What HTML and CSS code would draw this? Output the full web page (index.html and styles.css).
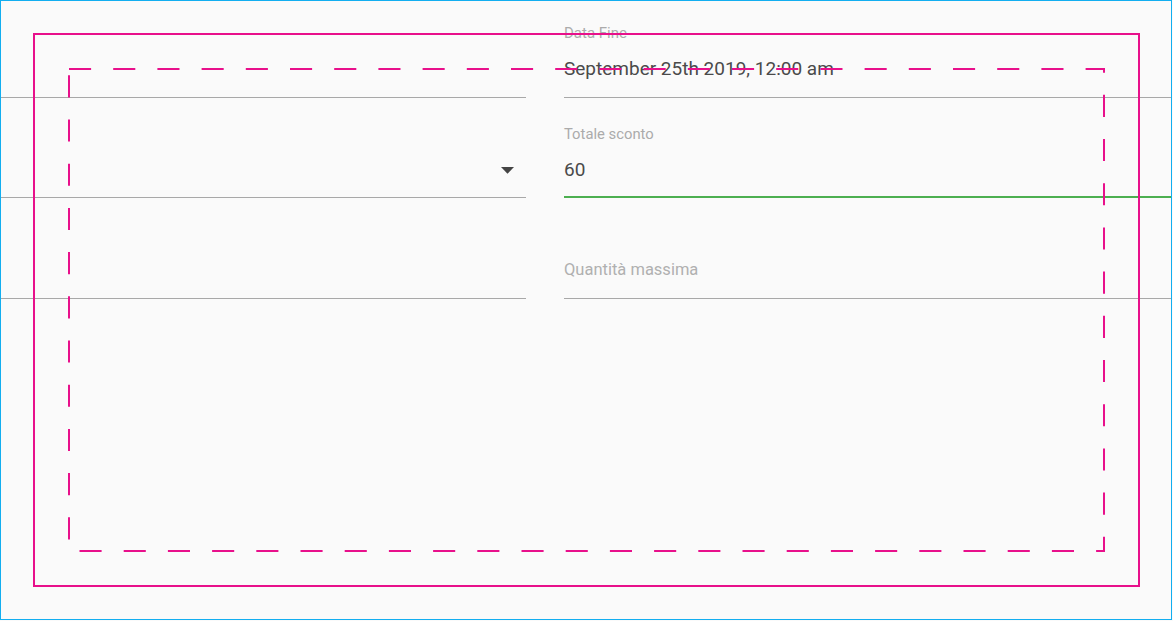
FILE: index.html
```html
<!DOCTYPE html>
<html lang="it">
<head>
<meta charset="utf-8">
<title>Form</title>
<link rel="stylesheet" href="styles.css">
</head>
<body>
<div class="stage">
  <div class="frame">
    <div class="form">
      <div class="field row1">
        <div class="control"></div>
      </div>
      <div class="field row1">
        <div class="label label-date">Data Fine</div>
        <div class="control"><span class="value">September 25th 2019, 12:00 am</span></div>
      </div>

      <div class="field row2">
        <div class="control select">
          <span class="value"></span>
          <svg class="arrow" width="13" height="7" viewBox="0 0 13 7"><polygon points="0,0 13,0 6.5,6.8" fill="#444"/></svg>
        </div>
      </div>
      <div class="field row2">
        <div class="label">Totale sconto</div>
        <div class="control focused"><span class="value">60</span></div>
      </div>

      <div class="field row3">
        <div class="control"></div>
      </div>
      <div class="field row3">
        <div class="control"><span class="placeholder">Quantità massima</span></div>
      </div>
    </div>
  </div>
  <svg class="overlay" width="1172" height="620" viewBox="0 0 1172 620">
    <rect x="34" y="34" width="1105" height="552" fill="none" stroke="#e8108b" stroke-width="2"/>
    <rect x="69" y="69" width="1035" height="482" fill="none" stroke="#e8108b" stroke-width="2" stroke-dasharray="22.1 22.1"/>
  </svg>
</div>
</body>
</html>
```

FILE: styles.css
```css
html, body {
  margin: 0;
  padding: 0;
  background: #fafafa;
}

body {
  font-family: Roboto, "Liberation Sans", Arial, sans-serif;
}

.stage {
  position: relative;
  width: 1172px;
  height: 620px;
}

.frame {
  box-sizing: border-box;
  width: 1172px;
  height: 620px;
  border: 1px solid #12aef0;
  background: #fafafa;
  overflow: hidden;
}

.form {
  display: grid;
  grid-template-columns: 525px 1fr;
  grid-template-rows: 97px 100px 101px;
  column-gap: 38px;
}

.field {
  display: flex;
  flex-direction: column;
  justify-content: flex-end;
  min-width: 0;
}

.label {
  font-size: 14.8px;
  line-height: 16px;
  color: #ababab;
  margin-bottom: 16px;
  white-space: nowrap;
}

.label-date {
  font-size: 15px;
  margin-bottom: 16px;
}

.control {
  display: flex;
  align-items: center;
  height: 24px;
  padding-bottom: 15px;
  border-bottom: 1px solid #a8a8a8;
}

.row1 .control {
  padding-bottom: 16px;
}

.row3 .control {
  padding-bottom: 16px;
}

.control.focused {
  border-bottom: 2px solid #4caf50;
  padding-bottom: 14px;
}

.value {
  flex: 1;
  font-size: 19px;
  line-height: 24px;
  color: #4a4a4a;
  white-space: nowrap;
}

.placeholder {
  font-size: 16.5px;
  line-height: 24px;
  color: #b0b0b0;
  white-space: nowrap;
}

.select .arrow {
  display: block;
  margin-right: 12px;
  margin-top: 1px;
}

.overlay {
  position: absolute;
  left: 0;
  top: 0;
  pointer-events: none;
}
```
